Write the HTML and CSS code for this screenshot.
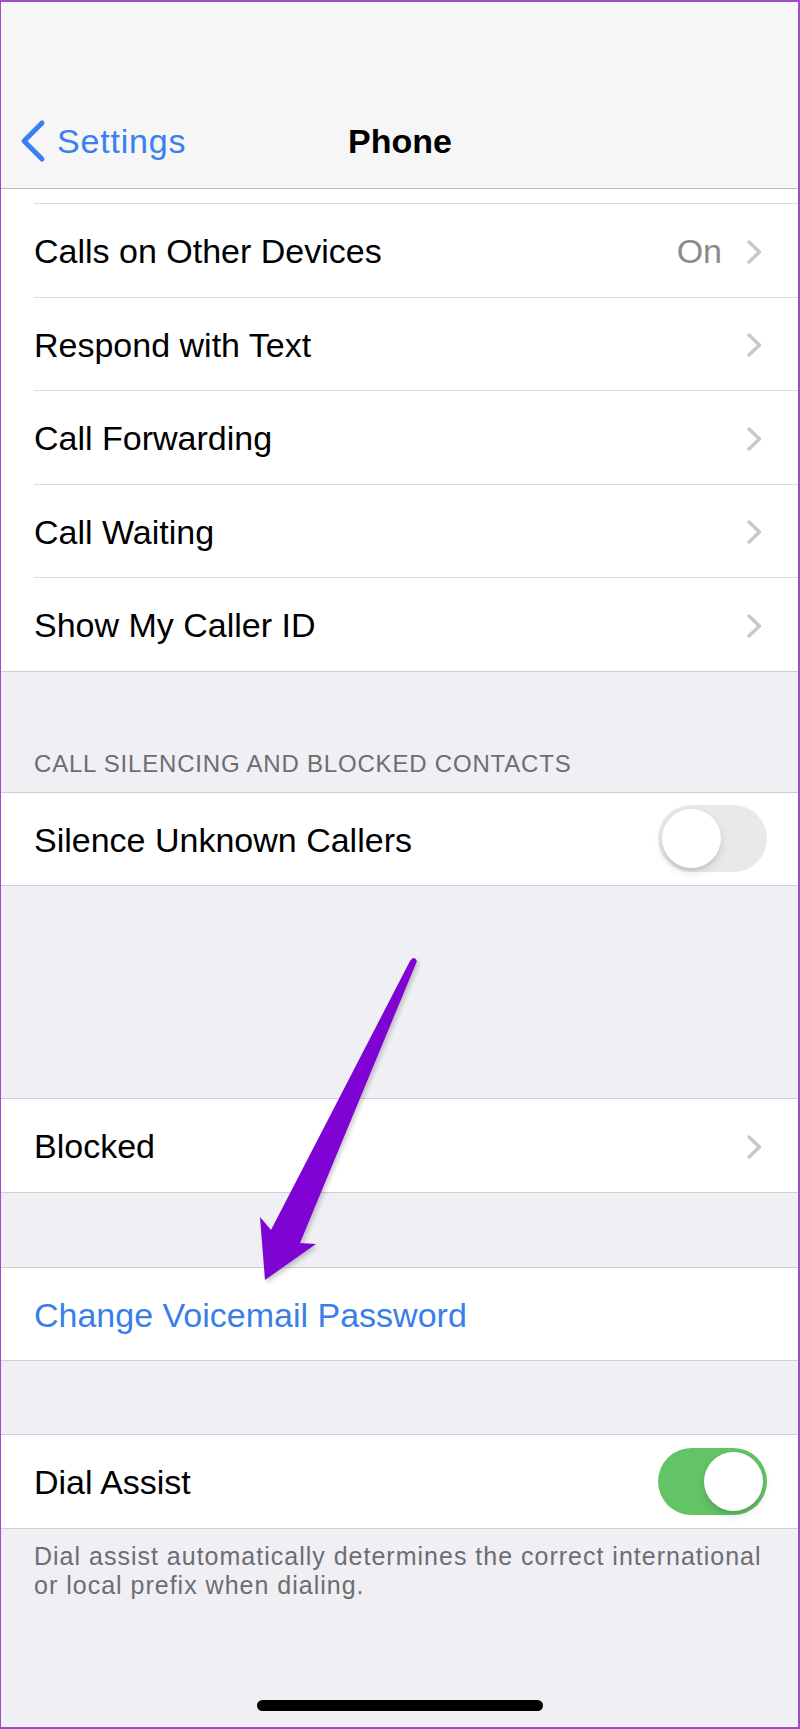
FILE: index.html
```html
<!DOCTYPE html>
<html lang="en">
<head>
  <meta charset="UTF-8">
  <title>Phone</title>
  <link rel="stylesheet" href="styles.css">
</head>
<body>
  <div class="screen">
    <header class="nav">
      <div class="nav-bar">
        <a class="back">
          <svg class="back-icon" width="28" height="44" viewBox="0 0 28 44">
            <polyline points="23,4 5,22 23,40" />
          </svg>
          <span>Settings</span>
        </a>
        <h1 class="title">Phone</h1>
        <span></span>
      </div>
    </header>

    <main class="content">
      <section class="group group-first">
        <div class="row row-cut"></div>
        <div class="row">
          <span class="label">Calls on Other Devices</span>
          <span class="detail">On</span>
          <svg class="chevron" width="15" height="24" viewBox="0 0 15 24"><polyline points="2,2 12.5,12 2,22" /></svg>
        </div>
        <div class="row">
          <span class="label">Respond with Text</span>
          <svg class="chevron" width="15" height="24" viewBox="0 0 15 24"><polyline points="2,2 12.5,12 2,22" /></svg>
        </div>
        <div class="row">
          <span class="label">Call Forwarding</span>
          <svg class="chevron" width="15" height="24" viewBox="0 0 15 24"><polyline points="2,2 12.5,12 2,22" /></svg>
        </div>
        <div class="row">
          <span class="label">Call Waiting</span>
          <svg class="chevron" width="15" height="24" viewBox="0 0 15 24"><polyline points="2,2 12.5,12 2,22" /></svg>
        </div>
        <div class="row">
          <span class="label">Show My Caller ID</span>
          <svg class="chevron" width="15" height="24" viewBox="0 0 15 24"><polyline points="2,2 12.5,12 2,22" /></svg>
        </div>
      </section>

      <div class="section-header">CALL SILENCING AND BLOCKED CONTACTS</div>
      <section class="group">
        <div class="row row-switch">
          <span class="label">Silence Unknown Callers</span>
          <span class="switch"><span class="knob"></span></span>
        </div>
      </section>

      <div class="spacer spacer-lg"></div>
      <section class="group">
        <div class="row">
          <span class="label">Blocked</span>
          <svg class="chevron" width="15" height="24" viewBox="0 0 15 24"><polyline points="2,2 12.5,12 2,22" /></svg>
        </div>
      </section>

      <div class="spacer"></div>
      <section class="group">
        <div class="row">
          <span class="label link">Change Voicemail Password</span>
        </div>
      </section>

      <div class="spacer spacer-sm"></div>
      <section class="group">
        <div class="row row-switch">
          <span class="label">Dial Assist</span>
          <span class="switch on"><span class="knob"></span></span>
        </div>
      </section>
      <p class="footer">Dial assist automatically determines the correct international or local prefix when dialing.</p>
    </main>

    <svg class="arrow" width="800" height="1729" viewBox="0 0 800 1729">
      <path d="M410 961 L271 1230 L260 1217 L265 1280 L316 1244 L300 1243 L417 961 Q414 955 410 961 Z" />
    </svg>
    <div class="home-indicator"></div>
  </div>
</body>
</html>
```

FILE: styles.css
```css
body {
  margin: 0;
  font-family: "Liberation Sans", Arial, sans-serif;
  background: #efeff4;
}
.screen {
  position: relative;
  width: 800px;
  height: 1729px;
  overflow: hidden;
  background: #efeff4;
}
.screen::after {
  content: "";
  position: absolute;
  inset: 0;
  border: 2px solid #9a4fc8;
  border-left-width: 1px;
  pointer-events: none;
}

/* nav */
.nav {
  height: 188px;
  background: #f6f6f6;
  border-bottom: 1px solid #bcbcbf;
  display: flex;
  flex-direction: column;
  justify-content: flex-end;
}
.nav-bar {
  height: 94px;
  display: grid;
  grid-template-columns: 1fr auto 1fr;
  align-items: center;
}
.back {
  display: flex;
  align-items: center;
  color: #3a7ff0;
  font-size: 34px;
  letter-spacing: 0.8px;
  padding-left: 19px;
}
.back-icon {
  margin-right: 10px;
}
.back-icon polyline {
  fill: none;
  stroke: #3a7ff0;
  stroke-width: 5;
  stroke-linecap: round;
  stroke-linejoin: round;
}
.title {
  margin: 0;
  font-size: 34px;
  font-weight: bold;
  color: #000;
}

/* list */
.group {
  background: #fff;
  border-top: 1px solid #cfcfd3;
  border-bottom: 1px solid #cfcfd3;
}
.group-first {
  border-top: none;
}
.row {
  height: 89.5px;
  padding-top: 3px;
  margin-left: 34px;
  padding-right: 38px;
  display: flex;
  align-items: center;
  font-size: 34px;
  color: #000;
}
.row:not(:last-child) {
  border-bottom: 1px solid #d9d9dc;
}
.row-cut {
  height: 14px;
  padding-top: 0;
}
.row-switch {
  padding-right: 33px;
}
.row-switch .switch {
  margin-top: -3px;
}
.label {
  flex: 1;
}
.link {
  color: #3a7fe8;
}
.detail {
  color: #8a8a8e;
  margin-right: 25px;
}
.chevron polyline {
  fill: none;
  stroke: #c7c7cc;
  stroke-width: 3.4;
  stroke-linecap: round;
  stroke-linejoin: round;
}

.switch {
  width: 109px;
  height: 67px;
  box-sizing: border-box;
  padding: 4px;
  border-radius: 34px;
  background: #e9e9eb;
  display: flex;
  justify-content: flex-start;
}
.switch.on {
  background: #63c466;
  justify-content: flex-end;
}
.knob {
  width: 59px;
  height: 59px;
  border-radius: 50%;
  background: #fff;
  box-shadow: 0 4px 10px rgba(0,0,0,0.13), 0 3px 1px rgba(0,0,0,0.05);
}

.section-header {
  height: 120px;
  box-sizing: border-box;
  display: flex;
  align-items: flex-end;
  padding: 0 34px 16px;
  font-size: 24px;
  line-height: 24px;
  letter-spacing: 0.8px;
  color: #6d6d72;
}
.spacer {
  height: 74px;
}
.spacer-lg {
  height: 212px;
}
.spacer-sm {
  height: 73px;
}
.footer {
  margin: 0;
  padding: 13px 34px 0;
  font-size: 25px;
  line-height: 29px;
  letter-spacing: 1px;
  color: #6d6d72;
}

/* overlays */
.arrow {
  position: absolute;
  left: 0;
  top: 0;
  pointer-events: none;
  filter: drop-shadow(2px 3px 2px rgba(0,0,0,0.2));
}
.arrow path {
  fill: #7f04d4;
}
.home-indicator {
  position: absolute;
  left: 257px;
  bottom: 18px;
  width: 286px;
  height: 11px;
  border-radius: 6px;
  background: #000;
}
```
